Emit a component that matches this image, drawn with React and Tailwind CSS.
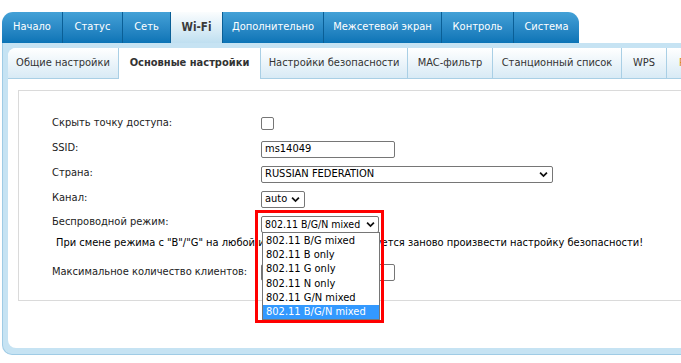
import React from "react";

const topTabs = [
  { label: "Начало", w: "w-[60px]", first: true },
  { label: "Статус", w: "w-[60px]" },
  { label: "Сеть", w: "w-[48px]" },
  { label: "Wi-Fi", w: "w-[52px]", active: true },
  { label: "Дополнительно", w: "w-[101px]" },
  { label: "Межсетевой экран", w: "w-[118px]" },
  { label: "Контроль", w: "w-[72px]" },
  { label: "Система", w: "w-[66px]", last: true },
];

const subTabs = [
  { label: "Общие настройки", w: "w-[111px]" },
  { label: "Основные настройки", w: "w-[142px]", active: true },
  { label: "Настройки безопасности", w: "w-[147px]" },
  { label: "MAC-фильтр", w: "w-[85px]" },
  { label: "Станционный список", w: "w-[129px]" },
  { label: "WPS", w: "w-[45px]" },
];

const modes = [
  "802.11 B/G mixed",
  "802.11 B only",
  "802.11 G only",
  "802.11 N only",
  "802.11 G/N mixed",
  "802.11 B/G/N mixed",
];

function classNames(...classes) {
  return classes.filter(Boolean).join(" ");
}

const Chevron = ({ className }) => (
  <svg viewBox="0 0 10 7" className={className} fill="none">
    <polyline points="1.2,1.5 5,5.2 8.8,1.5" stroke="#111" strokeWidth="2" />
  </svg>
);

const Row = ({ label, children, className }) => (
  <div className={classNames("flex items-center h-[25px]", className)}>
    <div className="w-[209px] shrink-0 text-[#222]">{label}</div>
    {children}
  </div>
);

const App = () => {
  return (
    <div className="relative w-[681px] h-[363px] overflow-hidden bg-white font-['DejaVu_Sans_Condensed','DejaVu_Sans',sans-serif] text-[11px]">
      <div className="pt-[12px] pl-[2px]">
        {/* top menu */}
        <div className="flex h-[31px]">
          {topTabs.map((t) => (
            <div
              key={t.label}
              className={classNames(
                "flex items-center justify-center shrink-0",
                t.w,
                !t.first && "border-l border-[#0a5f96]",
                t.first && "rounded-tl-[11px]",
                t.last && "rounded-tr-[11px]",
                t.active
                  ? "bg-gradient-to-b from-[#fbfdfe] to-[#bfdff0] text-[#3a3a3a] font-bold text-[11.5px]"
                  : "bg-gradient-to-b from-[#43a1d7] to-[#0b74b6] text-white"
              )}
            >
              {t.label}
            </div>
          ))}
        </div>

        {/* frame */}
        <div className="w-[720px] h-[312px] rounded-bl-[10px] border-l border-b border-[#9fcbe5] bg-[#c6e3f3] pt-[5px] pl-[5px] pb-[6px]">
          <div className="h-full bg-white rounded-tl-[8px] rounded-bl-[8px] overflow-hidden flex flex-col">
            <div className="flex h-[31px] border-b border-[#a9cfe5] shrink-0">
              {subTabs.map((t) => (
                <div
                  key={t.label}
                  className={classNames(
                    "flex items-center justify-center shrink-0 border-r border-[#a9cfe5] text-[#333]",
                    t.w,
                    t.active
                      ? "bg-white font-bold -mb-px"
                      : "bg-gradient-to-b from-[#ffffff] to-[#d8eaf5]"
                  )}
                >
                  {t.label}
                </div>
              ))}
              <div className="w-[120px] shrink-0 flex items-center pl-[12px] bg-gradient-to-b from-[#ffffff] to-[#d8eaf5] text-[#d9891c] whitespace-nowrap">
                Расписание
              </div>
            </div>

            <div className="pl-[10px] pt-[11px]">
              <div className="w-[700px] h-[211px] border border-r-0 border-[#dadada] pt-[20px] pl-[33px]">
                <Row label="Скрыть точку доступа:">
                  <div className="w-[13px] h-[13px] border border-[#767676] rounded-[2px] bg-white" />
                </Row>
                <Row label="SSID:">
                  <div className="w-[134px] h-[17px] mt-[1px] border border-[#767676] rounded-[2px] flex items-center px-[3px] text-black">
                    ms14049
                  </div>
                </Row>
                <Row label="Страна:">
                  <div className="w-[292px] h-[17px] mt-[2px] border border-[#767676] rounded-[2px] flex items-center justify-between pl-[3px] pr-[4px] text-black">
                    <span>RUSSIAN FEDERATION</span>
                    <Chevron className="w-[9px] h-[7px]" />
                  </div>
                </Row>
                <Row label="Канал:">
                  <div className="w-[44px] h-[17px] mt-[2px] border border-[#767676] rounded-[2px] flex items-center justify-between pl-[3px] pr-[4px] text-black">
                    <span>auto</span>
                    <Chevron className="w-[9px] h-[7px]" />
                  </div>
                </Row>
                <Row label="Беспроводной режим:" className="items-start pt-[3px] h-[23px]">
                  <div className="w-[118px] h-[17px] mt-[2px] border border-[#767676] rounded-[2px] flex items-center justify-between pl-[3px] pr-[3px] text-[10.5px] text-black whitespace-nowrap">
                    <span>802.11 B/G/N mixed</span>
                    <Chevron className="w-[9px] h-[7px]" />
                  </div>
                </Row>
                <div className="h-[14px] flex items-center pl-[4px] text-black whitespace-nowrap">
                  При смене режима с "B"/"G" на любой из режимов с "N" требуется заново произвести настройку безопасности!
                </div>
                <Row label="Максимальное количество клиентов:" className="mt-[10px] h-[21px]">
                  <div className="w-[134px] h-[17px] border border-[#767676] rounded-[2px]" />
                </Row>
              </div>
            </div>
          </div>
        </div>
      </div>

      {/* open dropdown */}
      <div className="absolute left-[262px] top-[232px] w-[118px] h-[88px] border border-[#767676] bg-white text-black">
        {modes.map((m, i) => (
          <div
            key={m}
            className={classNames(
              "h-[14.33px] flex items-center pl-[3px] leading-none whitespace-nowrap",
              i === modes.length - 1 && "bg-[#3399ff] text-white"
            )}
          >
            {m}
          </div>
        ))}
      </div>
      <div className="absolute left-[255px] top-[210px] w-[129px] h-[113px] border-[3px] border-[#ff0000]" />
    </div>
  );
};

export default App;
